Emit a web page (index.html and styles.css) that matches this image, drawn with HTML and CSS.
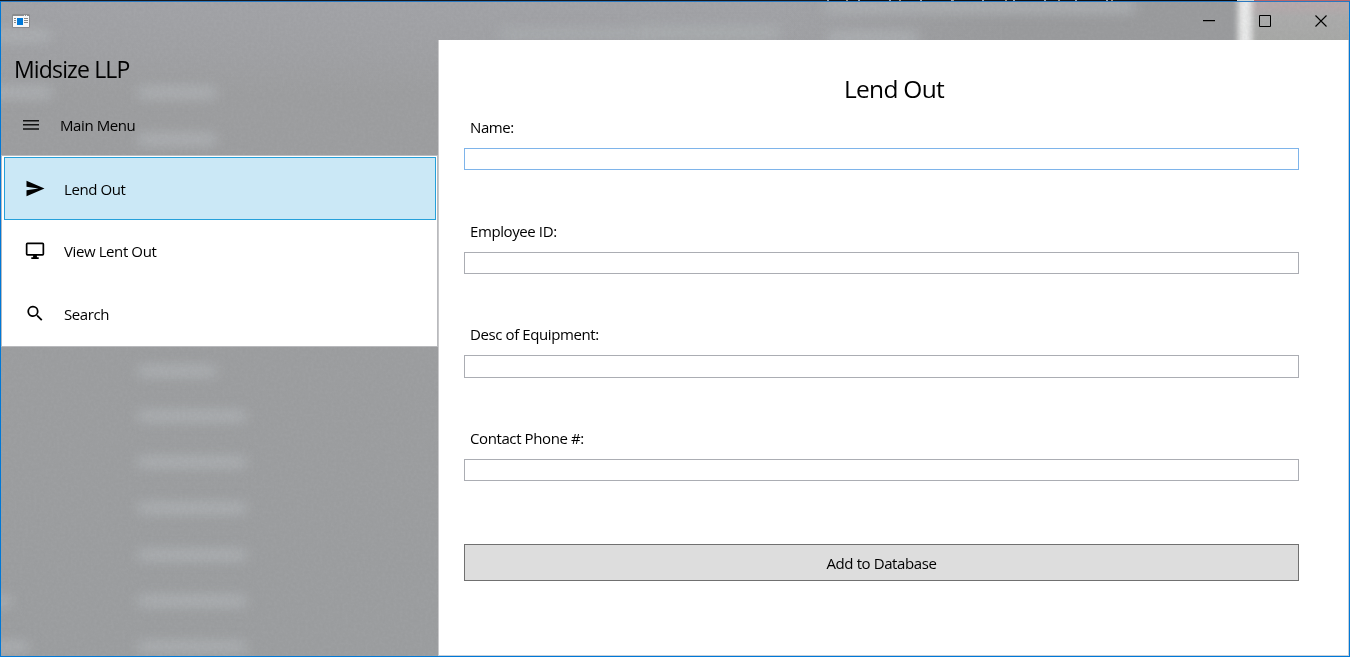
FILE: index.html
```html
<!DOCTYPE html>
<html lang="en">
<head>
<meta charset="utf-8">
<title>Midsize LLP</title>
<link rel="stylesheet" href="styles.css">
</head>
<body>
<div class="desktop-strip"><span class="strip-dark"></span><span class="strip-ticks"></span><span class="strip-dark-end"></span><span class="strip-light"></span><span class="strip-red"></span></div>
<div class="window">
  <svg class="acrylic" width="1348" height="654" viewBox="1 2 1348 654" color-interpolation-filters="sRGB" aria-hidden="true">
    <defs>
      <filter id="soft" filterUnits="userSpaceOnUse" x="-40" y="-40" width="1430" height="740"><feGaussianBlur stdDeviation="7 6"/></filter>
      <filter id="beam" x="-100%" y="-50%" width="300%" height="200%"><feGaussianBlur stdDeviation="3 0"/></filter>
      <filter id="grain" x="0" y="0" width="100%" height="100%"><feTurbulence type="fractalNoise" baseFrequency="0.35" numOctaves="2" seed="3"/><feColorMatrix values="0 0 0 0 0.4  0 0 0 0 0.4  0 0 0 0 0.4  1 0 0 0 -0.3"/></filter>
      <linearGradient id="base" x1="0" y1="0" x2="0" y2="1"><stop offset="0" stop-color="#a3a4a8"/><stop offset=".08" stop-color="#a1a2a5"/><stop offset=".14" stop-color="#9e9fa1"/><stop offset="1" stop-color="#9d9fa1"/></linearGradient>
      <linearGradient id="rose" x1="0" y1="0" x2="0" y2="1"><stop offset="0" stop-color="#b8a9ac"/><stop offset=".4" stop-color="#acacac"/><stop offset="1" stop-color="#a8a9a7"/></linearGradient>
      <linearGradient id="shade" x1="0" y1="0" x2="1" y2="0"><stop offset="0" stop-color="#9b9c9e" stop-opacity="0"/><stop offset=".5" stop-color="#9b9c9e"/><stop offset="1" stop-color="#9b9c9e"/></linearGradient>
    </defs>
    <rect x="1" y="2" width="1348" height="654" fill="url(#base)"/>
    <rect x="780" y="2" width="460" height="38" fill="url(#shade)"/>
    <rect x="1240" y="2" width="109" height="38" fill="url(#rose)"/>
    <g fill="#adb0b3" filter="url(#soft)">
      <rect x="-10" y="29" width="60" height="13"/>
      <rect x="-10" y="86" width="62" height="13"/>
      <rect x="138" y="86" width="78" height="13"/>
      <rect x="138" y="133" width="78" height="13"/>
      <rect x="138" y="365" width="78" height="12"/>
      <rect x="138" y="410" width="108" height="12"/>
      <rect x="138" y="456" width="108" height="12"/>
      <rect x="138" y="502" width="108" height="12"/>
      <rect x="138" y="549" width="108" height="12"/>
      <rect x="138" y="595" width="108" height="12"/>
      <rect x="138" y="641" width="108" height="12"/>
      <rect x="-10" y="595" width="21" height="12"/>
      <rect x="-10" y="641" width="38" height="12"/>
      <rect x="500" y="28" width="150" height="12" opacity=".7"/>
      <rect x="640" y="26" width="140" height="14" opacity=".8"/>
      <rect x="825" y="0" width="310" height="13"/>
      <rect x="828" y="31" width="90" height="13"/>
    </g>
    <rect x="1238" y="-20" width="14" height="80" fill="#e9eaea" filter="url(#beam)"/>
    <rect x="1" y="2" width="1348" height="654" filter="url(#grain)" opacity=".1"/>
  </svg>

  <header class="titlebar">
    <svg class="app-icon" width="18" height="14" viewBox="0 0 18 14"><path fill="#f7f7f7" stroke="#8b8c8e" d="M.5.5h17v13H.5z"/><path fill="#8b8c8e" d="M1 1h16v1H1z"/><path fill="#e8e8e8" d="M12 1h1v1h-1zm2 0h1v1h-1z"/><path fill="#0078d7" d="M5 4h6v7H5z"/><path stroke="#8a8a8a" d="M2 4.500h2M2 6.500h2M2 8.500h2M12 4.500h4M12 6.500h4M12 8.500h4"/></svg>
    <div class="window-controls">
      <svg width="12" height="12" viewBox="0 0 12 12"><path stroke="#000" d="M0 5.500h12"/><path stroke="#777" d="M0 6.500h12"/></svg>
      <svg width="12" height="12" viewBox="0 0 12 12"><path fill="none" stroke="#000" d="M.5.5h11v11H.5z"/></svg>
      <svg width="12" height="12" viewBox="0 0 12 12"><path stroke="#000" stroke-width="1.100" d="M.5.5l11 11M11.500.5l-11 11"/></svg>
    </div>
  </header>

  <div class="body">
    <aside class="sidebar">
      <h1 class="brand">Midsize LLP</h1>
      <div class="menu-head">
        <svg width="18" height="12" viewBox="0 0 18 12"><path fill="#111" d="M1 1h16v1.500H1zM1 5h16v1.500H1zM1 9.200h16v1.500H1z"/></svg>
        <span>Main Menu</span>
      </div>
      <nav class="menu">
        <a class="item selected"><svg width="24" height="24" viewBox="0 0 24 24"><path d="M3.500 19.300 21.500 11.500 3.500 3.700 3.500 9.700 15.500 11.500 3.500 13.300z"/></svg><span>Lend Out</span></a>
        <a class="item"><svg width="24" height="24" viewBox="0 0 24 24"><path fill-rule="evenodd" d="M4.500 3.500h15A1.700 1.700 0 0 1 21.200 5.200v9.800a1.700 1.700 0 0 1-1.700 1.700h-5.600v1.600h1.800v1.700H8.300v-1.700h1.800v-1.600H4.500a1.700 1.700 0 0 1-1.700-1.700V5.200A1.700 1.700 0 0 1 4.500 3.500zm0 1.700v9.800h15V5.200z"/></svg><span>View Lent Out</span></a>
        <a class="item"><svg width="24" height="24" viewBox="0 0 24 24"><g transform="translate(1.800 1.200) scale(.86)"><path d="M15.500 14h-.79l-.28-.27A6.500 6.500 0 1 0 13.730 14.430l.27.28v.79l5 4.990L20.490 19l-4.990-5zm-6 0A4.500 4.500 0 1 1 9.500 5a4.500 4.500 0 0 1 0 9z"/></g></svg><span>Search</span></a>
      </nav>
    </aside>

    <main class="content">
      <h2 class="title">Lend Out</h2>
      <form class="form">
        <div class="field"><label for="name">Name:</label><input class="active" id="name" type="text"></div>
        <div class="field"><label for="emp">Employee ID:</label><input id="emp" type="text"></div>
        <div class="field"><label for="desc">Desc of Equipment:</label><input id="desc" type="text"></div>
        <div class="field"><label for="phone">Contact Phone #:</label><input id="phone" type="text"></div>
        <button class="submit" type="button">Add to Database</button>
      </form>
    </main>
  </div>
</div>
</body>
</html>
```
FILE: styles.css
```css
* { box-sizing: border-box; }

body {
  margin: 0;
  width: 1350px;
  height: 657px;
  overflow: hidden;
  display: flex;
  flex-direction: column;
  color: #000;
  background: #fff;
  font: 15px/20px "Open Sans", "Noto Sans", sans-serif;
  letter-spacing: -0.4px;
}

.desktop-strip { display: flex; height: 1px; flex: none; }
.strip-dark { width: 827px; background: #17191f; }
.strip-ticks {
  width: 310px;
  background:
    repeating-linear-gradient(90deg, #9aa0a8 0 2px, transparent 2px 31px),
    repeating-linear-gradient(90deg, transparent 0 19px, #a08d78 19px 21px, transparent 21px 53px),
    #0c0d12;
}
.strip-dark-end { width: 100px; background: #0c0d12; }
.strip-light { width: 17px; background: #d5d5d0; }
.strip-red { flex: 1; background: #b7676b; }

.window {
  position: relative;
  flex: 1;
  display: flex;
  flex-direction: column;
  border: 1px solid #0078d7;
  border-top-color: #2a78bf;
  overflow: hidden;
}

.acrylic { position: absolute; top: 0; left: 0; }

.titlebar {
  position: relative;
  flex: none;
  height: 38px;
  display: flex;
  justify-content: space-between;
  align-items: center;
  padding: 0 22px 0 11px;
}
.app-icon { display: block; }
.window-controls { display: flex; gap: 44px; }

.body { position: relative; flex: 1; display: flex; min-height: 0; }

.sidebar { width: 437px; flex: none; }
.brand {
  margin: 0;
  height: 56px;
  padding: 14px 0 0 13px;
  font-size: 23px;
  line-height: 30px;
  font-weight: 400;
  letter-spacing: -0.85px;
}
.menu-head {
  height: 59px;
  display: flex;
  align-items: center;
  gap: 20px;
  padding: 0 0 2px 21px;
}
.menu {
  border: 1px solid #b9babd;
  background: #fff;
  height: 192px;
  padding: 1px 1px 1px 2px;
}
.item {
  display: flex;
  align-items: center;
  height: 62.500px;
  padding-left: 18px;
  gap: 17px;
  border: 1px solid transparent;
}
.item span { padding-top: 1px; }
.item:nth-child(2) span { padding-top: 0; }
.item.selected {
  height: 63px;
  background: #cbe8f6;
  border-color: #26a0da;
}

.content {
  flex: 1;
  background: #fff;
  border-left: 1px solid #c9c9cb;
  border-right: 1px solid #c6d0da;
  border-bottom: 1px solid #c6d0da;
  padding: 32px 49px 0 25px;
}
.title {
  margin: 0;
  height: 45px;
  padding-left: 25px;
  text-align: center;
  font-size: 24.500px;
  line-height: 34px;
  font-weight: 400;
  letter-spacing: -0.7px;
}
.form { display: flex; flex-direction: column; }
.field { height: 103.670px; }
.field label { display: block; height: 31px; padding-left: 6px; }
.field input {
  display: block;
  width: 100%;
  height: 22px;
  padding: 0 4px;
  border: 1px solid #abadb3;
  border-radius: 0;
  background: #fff;
  outline: none;
}
.field:nth-child(3) input { height: 23px; }
.field input.active { border-color: #7eb4ea; }
.submit {
  height: 37px;
  margin-top: 12px;
  padding: 2px 0 0;
  border: 1px solid #707070;
  border-radius: 0;
  background: #ddd;
  font: inherit;
  letter-spacing: inherit;
  color: #000;
}
```
